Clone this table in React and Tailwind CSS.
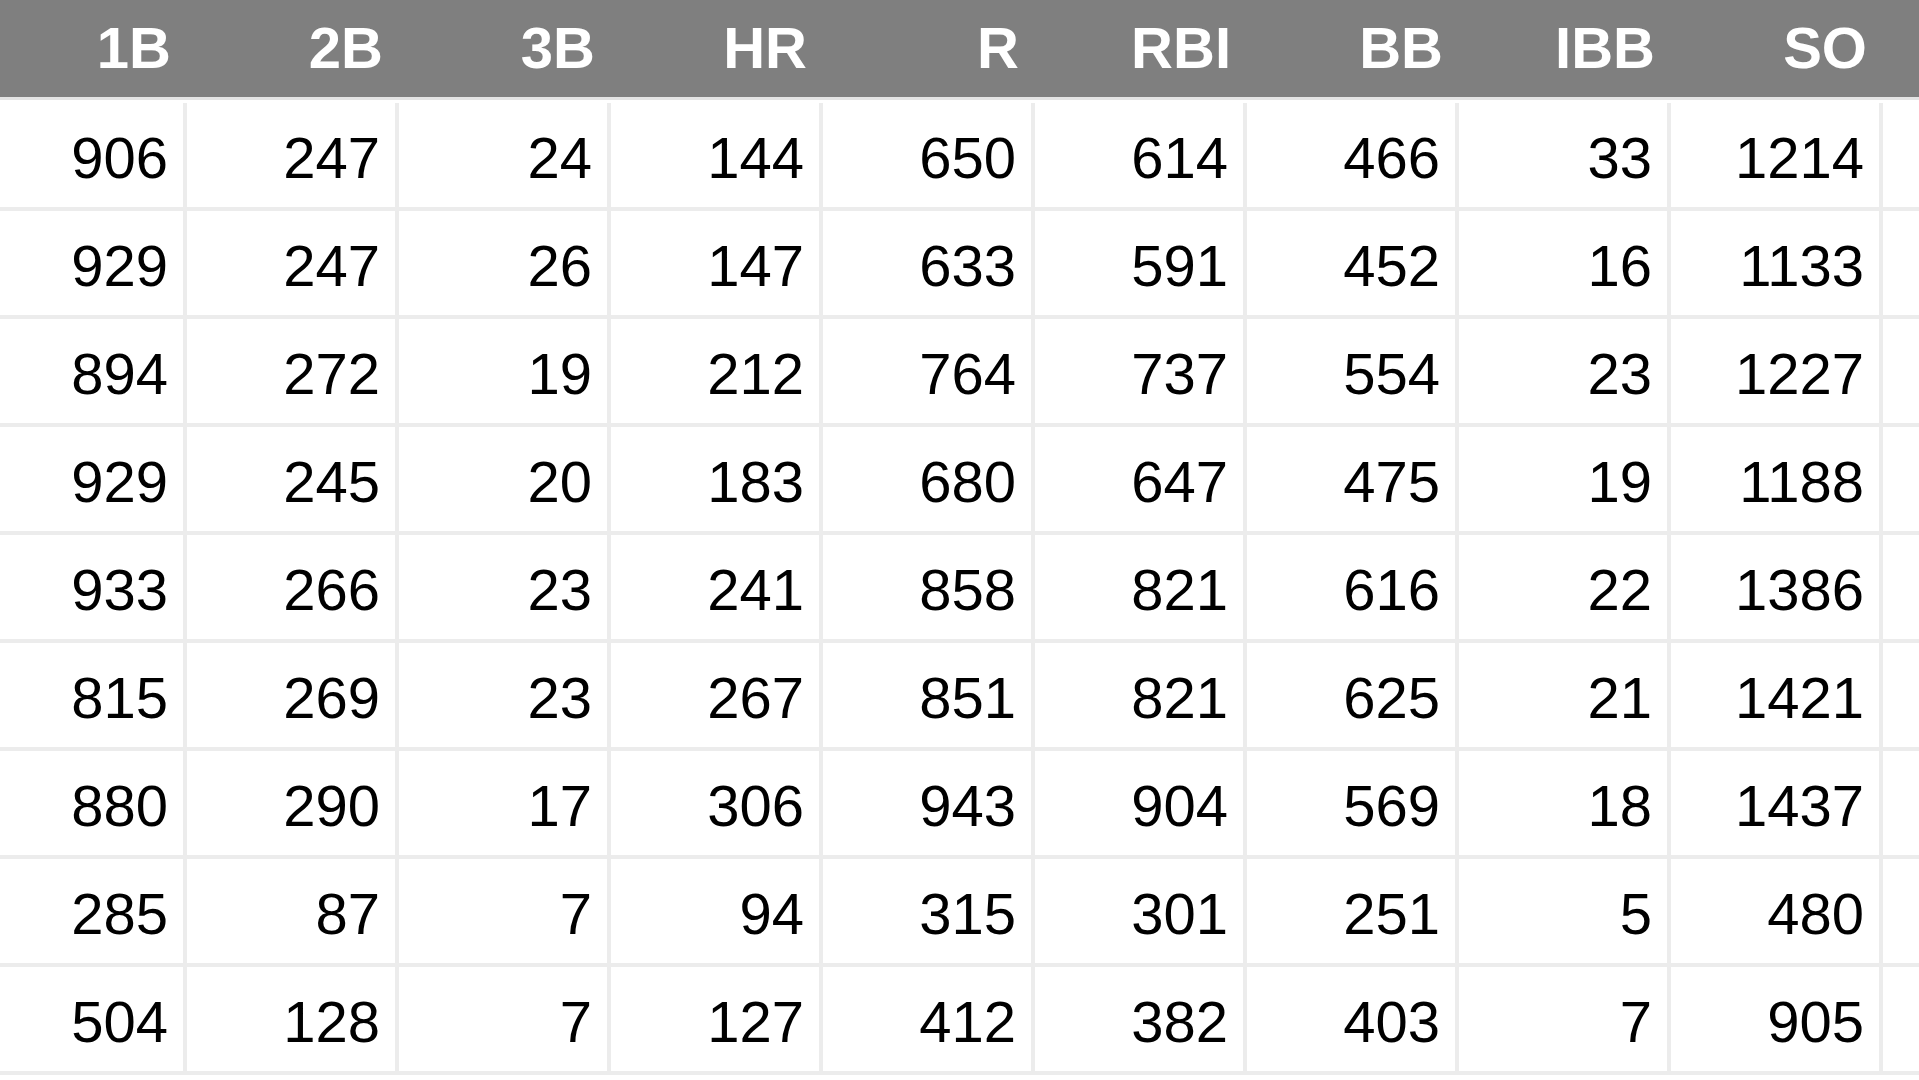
import React from 'react'

const headers = ['1B', '2B', '3B', 'HR', 'R', 'RBI', 'BB', 'IBB', 'SO']

const rows = [
  [906, 247, 24, 144, 650, 614, 466, 33, 1214],
  [929, 247, 26, 147, 633, 591, 452, 16, 1133],
  [894, 272, 19, 212, 764, 737, 554, 23, 1227],
  [929, 245, 20, 183, 680, 647, 475, 19, 1188],
  [933, 266, 23, 241, 858, 821, 616, 22, 1386],
  [815, 269, 23, 267, 851, 821, 625, 21, 1421],
  [880, 290, 17, 306, 943, 904, 569, 18, 1437],
  [285, 87, 7, 94, 315, 301, 251, 5, 480],
  [504, 128, 7, 127, 412, 382, 403, 7, 905],
]

function App() {
  return (
    <div className="w-[1919px] h-[1080px] overflow-hidden bg-white font-['Liberation_Sans',Arial,sans-serif]">
      {/* header bar */}
      <div className="flex h-[100px] bg-[#7f7f7f] border-b-[3px] border-[#e4e4e4]">
        {headers.map((h, i) => (
          <div
            key={h}
            className={(i === 0 ? 'w-[187px]' : 'w-[212px]') + ' shrink-0 flex items-center justify-end pr-[16px] pb-[2px] text-white font-bold text-[58px] leading-none'}
          >
            {h}
          </div>
        ))}
      </div>

      <div className="mt-[3px]">
        {rows.map((r, ri) => (
          <div key={ri} className="flex h-[108px] border-b-4 border-[#ececec]">
            {r.map((v, i) => (
              <div
                key={i}
                className={(i === 0 ? 'w-[187px]' : 'w-[212px]') + ' shrink-0 flex items-center justify-end pr-[15px] pt-[6px] border-r-4 border-[#ececec] text-black text-[58px] leading-none'}
              >
                {v}
              </div>
            ))}
            <div className="flex-1" />
          </div>
        ))}
      </div>
    </div>
  )
}

export default App
